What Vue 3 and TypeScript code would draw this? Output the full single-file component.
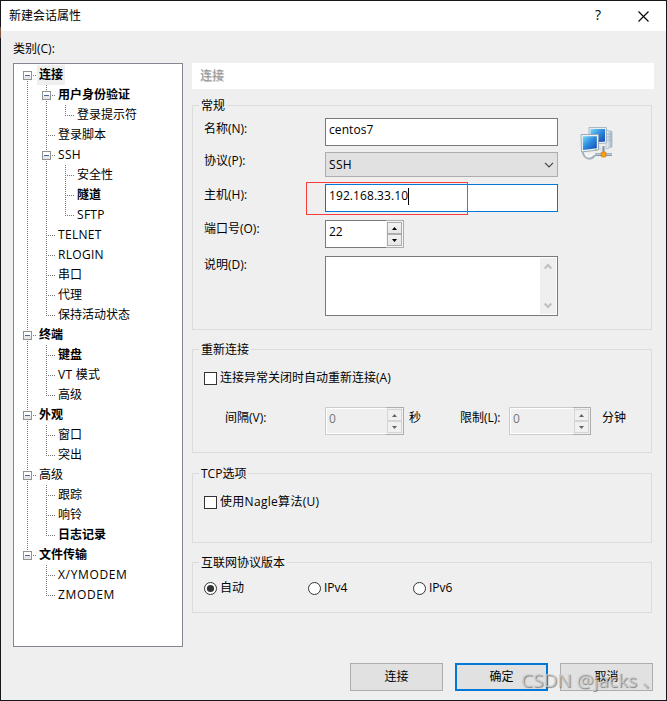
<script setup lang="ts">
import { ref } from 'vue'

interface TreeRow {
  label: string
  level: number
  bold?: boolean
  expander?: boolean
  selected?: boolean
  tracking?: 'loose' | 'looser'
  /** guide shape for every column left of the label */
  guides: string[]
}

const tree: TreeRow[] = [
  { label: '连接', level: 0, bold: true, expander: true, selected: true, guides: ['first'] },
  { label: '用户身份验证', level: 1, bold: true, expander: true, guides: ['line', 'tee'] },
  { label: '登录提示符', level: 2, guides: ['line', 'line', 'end'] },
  { label: '登录脚本', level: 1, guides: ['line', 'tee'] },
  { label: 'SSH', level: 1, expander: true, tracking: 'loose', guides: ['line', 'tee'] },
  { label: '安全性', level: 2, guides: ['line', 'line', 'tee'] },
  { label: '隧道', level: 2, bold: true, guides: ['line', 'line', 'tee'] },
  { label: 'SFTP', level: 2, tracking: 'loose', guides: ['line', 'line', 'end'] },
  { label: 'TELNET', level: 1, tracking: 'loose', guides: ['line', 'tee'] },
  { label: 'RLOGIN', level: 1, tracking: 'loose', guides: ['line', 'tee'] },
  { label: '串口', level: 1, guides: ['line', 'tee'] },
  { label: '代理', level: 1, guides: ['line', 'tee'] },
  { label: '保持活动状态', level: 1, guides: ['line', 'end'] },
  { label: '终端', level: 0, bold: true, expander: true, guides: ['tee'] },
  { label: '键盘', level: 1, bold: true, guides: ['line', 'tee'] },
  { label: 'VT 模式', level: 1, tracking: 'loose', guides: ['line', 'tee'] },
  { label: '高级', level: 1, guides: ['line', 'end'] },
  { label: '外观', level: 0, bold: true, expander: true, guides: ['tee'] },
  { label: '窗口', level: 1, guides: ['line', 'tee'] },
  { label: '突出', level: 1, guides: ['line', 'end'] },
  { label: '高级', level: 0, expander: true, guides: ['tee'] },
  { label: '跟踪', level: 1, guides: ['line', 'tee'] },
  { label: '响铃', level: 1, guides: ['line', 'tee'] },
  { label: '日志记录', level: 1, bold: true, guides: ['line', 'end'] },
  { label: '文件传输', level: 0, bold: true, expander: true, guides: ['end'] },
  { label: 'X/YMODEM', level: 1, tracking: 'looser', guides: ['none', 'tee'] },
  { label: 'ZMODEM', level: 1, tracking: 'looser', guides: ['none', 'end'] },
]

const ipVersions = ['自动', 'IPv4', 'IPv6']
const ipVersion = ref('自动')
</script>

<template>
  <div class="window">
    <header class="titlebar">
      <span class="title">新建会话属性</span>
      <span class="help">?</span>
      <svg class="close" width="11" height="11" viewBox="0 0 11 11">
        <path d="M0.5 0.5L10.5 10.5M10.5 0.5L0.5 10.5" stroke="#000" stroke-width="1.1" fill="none" />
      </svg>
    </header>

    <div class="category">类别(C):</div>

    <main class="content">
      <div class="tree">
        <div v-for="(row, i) in tree" :key="i" class="tree-row">
          <span v-for="(g, c) in row.guides" :key="c" class="guide" :class="g">
            <svg
              v-if="row.expander && c === row.level"
              class="expander"
              width="9"
              height="9"
              viewBox="0 0 9 9"
              shape-rendering="crispEdges"
            >
              <rect width="9" height="9" rx="1" fill="#919191" />
              <rect x="1" y="1" width="7" height="4" fill="#fff" />
              <rect x="1" y="5" width="7" height="3" fill="#e6e6e6" />
              <rect x="2" y="4" width="5" height="1" fill="#4b63a7" />
            </svg>
          </span>
          <span class="node" :class="[row.tracking, { bold: row.bold, selected: row.selected }]">{{ row.label }}</span>
        </div>
      </div>

      <section class="panel">
        <div class="banner">连接</div>

        <div class="group general">
          <div class="legend">常规</div>
          <div class="rows">
            <div class="field name">
              <label>名称(N):</label>
              <div class="input">centos7</div>
              <svg class="net" width="34" height="34" viewBox="0 0 34 34">
                <defs>
                  <linearGradient id="scr" x1="0" y1="0" x2="1" y2="1">
                    <stop offset="0" stop-color="#7fd8f5" />
                    <stop offset="0.45" stop-color="#2f8fe0" />
                    <stop offset="1" stop-color="#1443b4" />
                  </linearGradient>
                  <linearGradient id="tower" x1="0" y1="0" x2="1" y2="0">
                    <stop offset="0" stop-color="#f5f8fa" />
                    <stop offset="1" stop-color="#9db4c5" />
                  </linearGradient>
                </defs>
                <path d="M26 4L32 5.5V21L26 23Z" fill="url(#tower)" stroke="#a3b5c2" stroke-width=".7" />
                <path d="M27 8L31 8.600M27 11H31M27 14H31" stroke="#8fa8ba" stroke-width=".7" />
                <path d="M9 1.500H26.500V17L9 18.500Z" fill="#e8eef2" stroke="#9aabb7" stroke-width=".8" />
                <path d="M10.500 3H25V15.500L10.500 17Z" fill="url(#scr)" />
                <path d="M19 19C18 22 20 24 25 23" fill="none" stroke="#d6dfe5" stroke-width="3" />
                <path d="M4 25C4 32 11 33.500 14 29" fill="none" stroke="#a6b3bd" stroke-width="4" />
                <path d="M5 26C6 31 10 32 13 28" fill="none" stroke="#f4f7f9" stroke-width="2.400" />
                <path d="M1 8.500H18.500V24L1.500 26Z" fill="#edf2f5" stroke="#94a5b1" stroke-width=".9" />
                <path d="M2.800 10.300H16.800V22.300L3 24Z" fill="url(#scr)" />
                <path d="M15 28.500H32" stroke="#8497a5" stroke-width="3" />
                <path d="M15 28.200H32" stroke="#d8e3ea" stroke-width="1" />
                <path d="M23.500 20V26" stroke="#8497a5" stroke-width="2" />
                <rect x="21.200" y="26" width="4.800" height="5" rx=".8" fill="#ff9d0a" stroke="#cb7200" stroke-width=".6" />
                <circle cx="16" cy="23.800" r=".8" fill="#70cc35" />
              </svg>
            </div>
            <div class="field protocol">
              <label>协议(P):</label>
              <div class="combo">
                <span class="loose">SSH</span>
                <svg width="10" height="6" viewBox="0 0 10 6">
                  <path d="M1 .8L5 4.800L9 .8" fill="none" stroke="#444" stroke-width="1.200" />
                </svg>
              </div>
            </div>
            <div class="field host">
              <label>主机(H):</label>
              <div class="input focused">192.168.33.10<i class="caret"></i></div>
              <div class="marker"></div>
            </div>
            <div class="field port">
              <label>端口号(O):</label>
              <div class="spin">
                <span class="value">22</span>
                <span class="arrows">
                  <span><svg width="5" height="3" viewBox="0 0 5 3"><path d="M0 3L2.500 0L5 3Z" /></svg></span>
                  <span><svg width="5" height="3" viewBox="0 0 5 3"><path d="M0 0L2.500 3L5 0Z" /></svg></span>
                </span>
              </div>
            </div>
            <div class="field desc">
              <label>说明(D):</label>
              <div class="textarea">
                <div class="scroll">
                  <svg width="8" height="7" viewBox="0 0 8 7"><path d="M.7 5.500L4 2L7.300 5.500" /></svg>
                  <svg width="8" height="7" viewBox="0 0 8 7"><path d="M.7 1.500L4 5L7.300 1.500" /></svg>
                </div>
              </div>
            </div>
          </div>
        </div>

        <div class="group reconnect">
          <div class="legend">重新连接</div>
          <div class="check"><i class="box"></i>连接异常关闭时自动重新连接(A)</div>
          <div class="timing">
            <label class="interval">间隔(V):</label>
            <div class="spin disabled">
              <span class="value">0</span>
              <span class="arrows">
                <span><svg width="5" height="3" viewBox="0 0 5 3"><path d="M0 3L2.500 0L5 3Z" /></svg></span>
                <span><svg width="5" height="3" viewBox="0 0 5 3"><path d="M0 0L2.500 3L5 0Z" /></svg></span>
              </span>
            </div>
            <label class="seconds">秒</label>
            <label class="limit">限制(L):</label>
            <div class="spin disabled wide">
              <span class="value">0</span>
              <span class="arrows">
                <span><svg width="5" height="3" viewBox="0 0 5 3"><path d="M0 3L2.500 0L5 3Z" /></svg></span>
                <span><svg width="5" height="3" viewBox="0 0 5 3"><path d="M0 0L2.500 3L5 0Z" /></svg></span>
              </span>
            </div>
            <label class="minutes">分钟</label>
          </div>
        </div>

        <div class="group tcp">
          <div class="legend">TCP选项</div>
          <div class="check loose"><i class="box"></i>使用Nagle算法(U)</div>
        </div>

        <div class="group ip">
          <div class="legend">互联网协议版本</div>
          <div class="radios">
            <div v-for="v in ipVersions" :key="v" class="radio" @click="ipVersion = v">
              <svg width="13" height="13" viewBox="0 0 13 13">
                <circle cx="6.500" cy="6.500" r="6" fill="#fff" stroke="#333" />
                <circle v-if="v === ipVersion" cx="6.500" cy="6.500" r="3.600" fill="#333" />
              </svg>
              {{ v }}
            </div>
          </div>
        </div>
      </section>
    </main>

    <footer class="buttons">
      <button>连接</button>
      <button class="default">确定</button>
      <button>取消</button>
    </footer>
    <div class="watermark">CSDN @jacks 、</div>
  </div>
</template>

<style>
body {
  margin: 0;
  overflow: hidden;
}
</style>

<style scoped>
* {
  box-sizing: border-box;
}
.window {
  position: relative;
  width: 667px;
  height: 701px;
  padding: 1px;
  background:
    linear-gradient(#efefef, #efefef) 1px 1px / 665px 699px no-repeat,
    linear-gradient(#79563f, #79563f) 0 27px / 1px 11px no-repeat,
    #17171b;
  font: 12px/16px 'Open Sans', 'Noto Sans CJK SC', sans-serif;
  color: #000;
  white-space: nowrap;
}
.loose {
  letter-spacing: 0.3px;
}
.looser {
  letter-spacing: 0.65px;
}
.titlebar {
  display: flex;
  align-items: center;
  height: 30px;
  background: #fff;
  padding: 0 17px 0 8px;
}
.title {
  flex: 1;
}
.help {
  font-size: 14px;
  margin: -2px 37px 0 0;
}
.category {
  height: 32px;
  padding: 10px 0 0 12px;
}
.content {
  display: flex;
  gap: 9px;
  padding-left: 12px;
}
.tree {
  width: 170px;
  height: 584px;
  border: 1px solid #828790;
  background: #fff;
  padding: 1px 0 0 4px;
}
.tree-row {
  display: flex;
  height: 20px;
}
.guide {
  --v: repeating-linear-gradient(#777 0 1px, transparent 1px 2px);
  --h: repeating-linear-gradient(90deg, #777 0 1px, transparent 1px 2px);
  width: 19px;
  height: 20px;
  padding: 6px 0 0 5px;
  background-repeat: no-repeat;
}
.expander {
  display: block;
}
.guide.line {
  background: var(--v) 9px 0 / 1px 20px no-repeat;
}
.guide.tee {
  background:
    var(--v) 9px 0 / 1px 20px no-repeat,
    var(--h) 9px 10px / 9px 1px no-repeat;
}
.guide.end {
  background:
    var(--v) 9px 0 / 1px 11px no-repeat,
    var(--h) 9px 10px / 9px 1px no-repeat;
}
.guide.first {
  background:
    var(--v) 9px 10px / 1px 10px no-repeat,
    var(--h) 9px 10px / 9px 1px no-repeat;
}
.node {
  padding: 0 2px;
  line-height: 20px;
}
.node.bold {
  font-weight: 700;
}
.node.selected {
  background: #efefef;
}
.panel {
  width: 462px;
}
.banner {
  height: 26px;
  padding-left: 8px;
  line-height: 26px;
  background: #fff;
  color: #999;
  text-shadow: 0.5px 0.5px #bbb;
}
.group {
  width: 460px;
  border: 1px solid #dcdcdc;
}
.legend {
  width: fit-content;
  height: 16px;
  margin: -8px 0 0 6px;
  padding: 0 2px;
  background: #efefef;
}
.general {
  height: 225px;
  margin-top: 16px;
}
.rows {
  padding: 4px 0 0 11px;
}
.field {
  position: relative;
  display: flex;
  align-items: flex-start;
}
.field label {
  width: 121px;
  padding-top: 1px;
}
.field.name label,
.field.host label {
  padding-top: 3px;
}
.protocol {
  margin-top: 6px;
}
.host {
  margin-top: 7px;
}
.port,
.desc {
  margin-top: 8px;
}
.input {
  display: flex;
  width: 233px;
  height: 28px;
  padding: 3px 0 0 3px;
  border: 1px solid #7a7a7a;
  background: #fff;
  letter-spacing: 0.08px;
}
.input.focused {
  border-color: #0078d7;
}
.caret {
  width: 1px;
  height: 17px;
  background: #000;
}
.marker {
  position: absolute;
  left: 102px;
  top: -2px;
  width: 162px;
  height: 33px;
  border: 1px solid #fa3c3c;
}
.net {
  margin: 8px 0 -14px 22px;
}
.combo {
  display: flex;
  align-items: center;
  justify-content: space-between;
  width: 233px;
  height: 25px;
  padding: 0 3px;
  border: 1px solid #adadad;
  background: #e1e1e1;
}
.spin {
  display: flex;
  width: 79px;
  height: 28px;
}
.spin.wide {
  width: 82px;
}
.value {
  flex: 1;
  padding: 3px 0 0 3px;
  border: 1px solid #7a7a7a;
  border-right: 0;
  background: #fff;
}
.arrows {
  display: flex;
  flex-direction: column;
  width: 18px;
  padding: 1px;
  border: 1px solid #abadb3;
  border-left: 0;
  background: #f4f4f4;
}
.arrows span {
  display: flex;
  flex: 1;
  width: 15px;
  align-items: center;
  justify-content: center;
  border: 1px solid #acacac;
  background: linear-gradient(#f2f2f2, #e6e6e6);
}
.disabled .value {
  border-color: #ccc;
  background: #efefef;
  box-shadow: inset 1px 1px #fff, inset 0 -1px #fff;
  color: #777;
}
.disabled .arrows {
  background: #f0f0f0;
}
.disabled .arrows span {
  border-color: #d5d5d5;
  background: #f0f0f0;
}
.disabled path {
  fill: #666;
}
.textarea {
  display: flex;
  justify-content: flex-end;
  width: 233px;
  height: 60px;
  padding: 1px;
  border: 1px solid #7a7a7a;
  background: #fff;
}
.scroll {
  display: flex;
  flex-direction: column;
  justify-content: space-between;
  align-items: center;
  width: 16px;
  padding: 5px 1px 5px 0;
  background: #efefef;
}
.scroll path {
  fill: none;
  stroke: #bfbfbf;
  stroke-width: 2;
}
.reconnect {
  height: 104px;
  margin-top: 19px;
}
.check {
  display: flex;
  align-items: center;
  gap: 3px;
  height: 16px;
  margin: 13px 0 0 11px;
}
.reconnect .check {
  margin-top: 12px;
}
.tcp .check {
  margin-top: 12px;
}
.box {
  width: 13px;
  height: 13px;
  border: 1px solid #333;
  background: #fff;
}
.timing {
  display: flex;
  align-items: flex-start;
  margin: 21px 0 0 32px;
}
.timing label {
  padding-top: 3px;
}
.interval {
  width: 100px;
}
.seconds {
  width: 51px;
  margin-left: 5px;
}
.limit {
  width: 49px;
}
.minutes {
  margin-left: 11px;
}
.tcp {
  height: 70px;
  margin-top: 20px;
}
.ip {
  height: 51px;
  margin-top: 19px;
}
.radios {
  display: grid;
  grid-template-columns: 104px 105px 100px;
  margin: 9px 0 0 11px;
}
.radio {
  display: flex;
  align-items: center;
  gap: 3px;
}
.buttons {
  display: flex;
  gap: 12px;
  padding: 16px 0 0 349px;
}
button {
  width: 93px;
  height: 28px;
  padding: 0;
  border: 1px solid #adadad;
  background: #e1e1e1;
  font: inherit;
  color: #000;
}
button.default {
  border: 2px solid #0078d7;
}
.watermark {
  position: absolute;
  left: 521px;
  top: 667px;
  font-size: 19px;
  line-height: 26px;
  color: rgba(205, 205, 205, 0.8);
  text-shadow: 1px 1px 1px rgba(90, 90, 90, 0.7);
}
</style>
